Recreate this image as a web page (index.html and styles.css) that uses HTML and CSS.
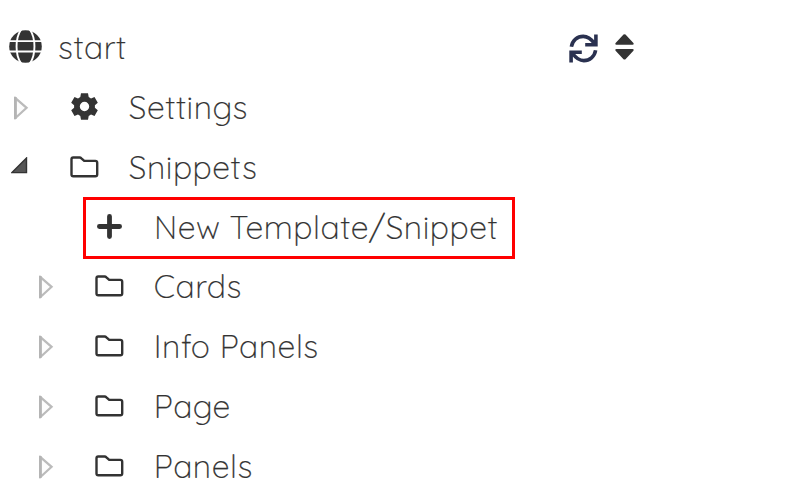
FILE: index.html
```
<!DOCTYPE html>
<html lang="en">
<head>
<meta charset="utf-8">
<title>Templates</title>
<link rel="stylesheet" href="styles.css">
</head>
<body>
<svg class="defs" aria-hidden="true">
  <symbol id="folder" viewBox="0 0 29 22"><path d="M3.2 1.5H9.6Q10.6 1.5 11.4 2.3L14.2 4.9H25.3Q27.2 4.9 27.2 6.8V18.4Q27.2 20.2 25.3 20.2H3.3Q1.5 20.2 1.5 18.4V3.3Q1.5 1.5 3.2 1.5Z" fill="none" stroke="#333" stroke-width="2.4"/></symbol>
  <symbol id="closed" viewBox="0 0 15 24"><path d="M1.7 2.3V21.7L12.6 11.8Z" fill="#fcfcfc" stroke="#bbb" stroke-width="2.2"/><path d="M1.3 1V23" stroke="#b4b4b4" stroke-width="2.6"/></symbol>
</svg>
<main class="tree">
  <div class="row root">
    <svg class="globe" viewBox="0 0 33 33"><circle cx="16.5" cy="16.5" r="16.3" fill="#333"/><g fill="none" stroke="#fff" stroke-width="1.9"><path d="M12.2 -.5C6 8 6 25 12.2 33.5M20.8 -.5C27 8 27 25 20.8 33.5M0 11.1H33M0 21.5H33"/></g></svg>
    <span class="label start">start</span>
    <div class="actions">
      <svg class="refresh" viewBox="0 0 29 29" fill="none" stroke="#2a3150" stroke-width="3.6"><path d="M2.4 12.8C3.4 6.4 8.4 2.4 14.2 2.4C18.6 2.4 22 4.8 25.4 9.5M26.9 .5V10.8H16.2"/><path d="M26.6 16.2C25.6 22.6 20.6 26.6 14.8 26.6C10.4 26.6 7 24.2 3.6 19.5M2.1 28.5V18.2H12.8"/></svg>
      <svg class="sort" viewBox="0 0 19 26"><path d="M8.5.6Q9.5-.2 10.5.6L18.4 9Q19.3 10.8 17.5 10.8H1.5Q-.3 10.8.6 9ZM1.5 15H17.5Q19.3 15 18.4 16.8L10.5 25.2Q9.5 26 8.5 25.2L.6 16.8Q-.3 15 1.5 15Z" fill="#333"/></svg>
    </div>
  </div>
  <div class="row item">
    <svg class="arrow"><use href="#closed"/></svg>
    <svg class="gear" viewBox="0 0 27 27"><path fill="#333" fill-rule="evenodd" d="M10 .3H17L17.7 4.1L20 5.5L23.5 4L26.8 9.8L23.9 12.2V14.8L26.8 17.2L23.5 23L20 21.5L17.7 22.9L17 26.7H10L9.3 22.9L7 21.5L3.5 23L.2 17.2L3.1 14.8V12.2L.2 9.8L3.5 4L7 5.5L9.3 4.1ZM13.5 8.8A4.7 4.7 0 1 0 13.5 18.2A4.7 4.7 0 1 0 13.5 8.8Z"/></svg>
    <span class="label settings">Settings</span>
  </div>
  <div class="row item">
    <svg class="opened" viewBox="0 0 17 17"><path d="M1 15.6L15.5 1V15.6Z" fill="#555" stroke="#333" stroke-width="1.4"/></svg>
    <svg class="folder"><use href="#folder"/></svg>
    <span class="label snippets">Snippets</span>
  </div>
  <div class="row highlight">
    <svg class="plus" viewBox="0 0 25 25"><path d="M12.5 2.4V22.6M2.4 12.5H22.6" stroke="#333" stroke-width="4.8" stroke-linecap="round"/></svg>
    <span class="label newitem">New Template/Snippet</span>
  </div>
  <div class="row item child">
    <svg class="arrow"><use href="#closed"/></svg><svg class="folder"><use href="#folder"/></svg>
    <span class="label cards">Cards</span>
  </div>
  <div class="row item child">
    <svg class="arrow"><use href="#closed"/></svg><svg class="folder"><use href="#folder"/></svg>
    <span class="label info">Info Panels</span>
  </div>
  <div class="row item child">
    <svg class="arrow"><use href="#closed"/></svg><svg class="folder"><use href="#folder"/></svg>
    <span class="label page">Page</span>
  </div>
  <div class="row item child">
    <svg class="arrow"><use href="#closed"/></svg><svg class="folder"><use href="#folder"/></svg>
    <span class="label panels">Panels</span>
  </div>
</main>
</body>
</html>
```
FILE: styles.css
```
* { box-sizing: border-box; }
body { margin: 0; height: 480px; overflow: hidden; background: #fff; color: #333; font-family: Quicksand, Lato, "Open Sans", sans-serif; font-size: 32px; letter-spacing: .53px; font-weight: 300; }
svg { display: block; flex: none; }
.defs { display: none; }
.tree { padding-top: 18px; }
.row { display: flex; align-items: center; height: 59.85px; }
.root { width: 634px; padding-left: 9px; }
.globe { width: 33px; height: 33px; margin: -2px 16px 0 0; }
.actions { display: flex; align-items: center; gap: 17px; margin: 0 0 0 auto; }
.refresh { width: 29px; height: 29px; margin-top: 1px; }
.sort { width: 19px; height: 26px; margin-top: -2px; }
.item { display: grid; grid-template-columns: 59px 58.8px auto; padding-left: 11px; }
.child { padding-left: 36px; }
.arrow { width: 15px; height: 24px; margin-left: 3px; }
.opened { width: 17px; height: 17px; margin-top: -5px; }
.folder { width: 29px; height: 22px; margin-top: -2px; }
.gear { width: 27px; height: 27px; margin: -3px 0 0 1px; }
.highlight { width: 432px; height: 62px; margin: -1px 0 -1.2px 83px; padding-left: 11px; border: 3px solid #f00; }
.plus { width: 25px; height: 25px; margin: -2px 32px 0 0; }
.label { white-space: nowrap; line-height: 24px; margin-bottom: 2px; -webkit-text-stroke: .2px #333; }
```
